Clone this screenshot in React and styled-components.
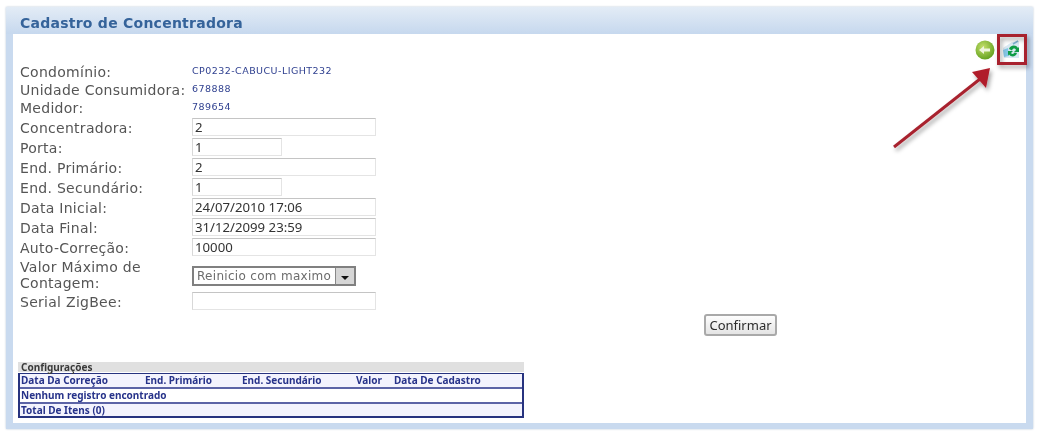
import React from "react"
import styled, { createGlobalStyle } from "styled-components"

const Global = createGlobalStyle`
    html, body {
        margin: 0;
        background: #fff;
    }
`

const Page = styled.div`
    width: 1039px;
    height: 437px;
    padding: 7px 6px 8px 6px;
    box-sizing: border-box;
    position: relative;
    overflow: hidden;
    filter: blur(0.55px);
`

const Panel = styled.div`
    height: 100%;
    box-sizing: border-box;
    display: flex;
    flex-direction: column;
    background: #c9daef;
    padding: 0 7px 6px 7px;
    box-shadow: 0 0 2px #b9c6d6;
`

const Header = styled.div`
    flex: none;
    height: 27px;
    box-sizing: border-box;
    margin: 0 -7px;
    padding: 5px 0 0 14px;
    display: flex;
    align-items: center;
    background: linear-gradient(#e3ecf6, #c6d8ee);
    color: #35639a;
    font: bold 14px "DejaVu Sans", sans-serif;
    letter-spacing: 0.25px;
`

const Body = styled.div`
    flex: 1;
    min-height: 0;
    background: #fff;
    padding: 5px 0 0 7px;
    display: flex;
    flex-direction: column;
`

const Toolbar = styled.div`
    flex: none;
    height: 22px;
    padding-right: 5px;
    margin-bottom: 2px;
    display: flex;
    justify-content: flex-end;
    align-items: center;
    gap: 7px;
`

const Form = styled.div`
    flex: none;
    display: flex;
    flex-direction: column;
    width: 380px;
`

const Row = styled.div`
    display: grid;
    grid-template-columns: 172px 1fr;
    align-items: center;
    height: ${(p) => p.$h || 20}px;
`

const Label = styled.div`
    color: #555;
    font: 14px/18px "DejaVu Sans", sans-serif;
    letter-spacing: 0.28px;
    white-space: nowrap;
`

const FieldLabel = styled(Label)`
    padding-top: 2px;
`

const WrappedLabel = styled(Label)`
    line-height: 16px;
    padding-top: 2px;
`

const Info = styled.div`
    color: #2e3f8f;
    font: 9.5px "DejaVu Sans", sans-serif;
    letter-spacing: 0.45px;
    margin-top: -4px;
`

const Input = styled.div`
    width: ${(p) => (p.$short ? 90 : 184)}px;
    height: 18px;
    box-sizing: border-box;
    border: 1px solid #e4e4e4;
    border-top-color: #c4c4c4;
    border-left-color: #d8d8d8;
    padding-left: 2px;
    color: #333;
    font: 13.2px/16px "Noto Sans", sans-serif;
    background: #fff;
`

const Select = styled.div`
    width: 164px;
    height: 20px;
    margin-top: 4px;
    box-sizing: border-box;
    border: 2px solid #808080;
    display: flex;
    align-items: center;
    justify-content: space-between;
    padding-left: 3px;
    color: #6c6c6c;
    font: 12px "DejaVu Sans", sans-serif;
    letter-spacing: 0.3px;
    white-space: nowrap;
`

const SelectArrow = styled.div`
    flex: none;
    width: 18px;
    height: 16px;
    background: #d6d6d6;
    border-left: 1px solid #888;
    display: flex;
    align-items: center;
    justify-content: center;

    &::after {
        content: "";
        margin-top: 4px;
        border-left: 4px solid transparent;
        border-right: 4px solid transparent;
        border-top: 4px solid #111;
    }
`

const ButtonRow = styled.div`
    flex: none;
    margin-top: 3px;
    padding-left: 684px;
`

const Button = styled.div`
    width: 73px;
    height: 22px;
    box-sizing: border-box;
    border: 2px solid #a9a9a9;
    border-radius: 3px;
    background: linear-gradient(#fdfdfd, #e4e4e4);
    color: #2c2c2c;
    font: 13px/18px "Noto Sans", sans-serif;
    text-align: center;
`

const Section = styled.div`
    flex: none;
    width: 506px;
    margin: 26px 0 0 -2px;
`

const SectionTitle = styled.div`
    height: 10px;
    background: #e0e0e0;
    color: #3a3a3a;
    padding-left: 3px;
    font: bold 10px/10px "Noto Sans", sans-serif;
`

const Grid = styled.div`
    border: 2px solid #27337f;
    border-top-width: 1px;
    margin-top: 1px;
`

const GridRow = styled.div`
    display: grid;
    box-sizing: border-box;
    grid-template-columns: ${(p) => p.$cols || "1fr"};
    height: ${(p) => p.$h}px;
    align-items: center;
    padding-left: 1px;
    background: ${(p) => (p.$alt ? "#f3f3fd" : "#fff")};
    border-top: ${(p) => (p.$line ? "2px solid #5c64a6" : "none")};
    color: #27338a;
    font: bold 10px/11px "Noto Sans", sans-serif;
    white-space: nowrap;
`

const BackIcon = () => (
    <svg width="20" height="20" viewBox="0 0 20 20">
        <defs>
            <radialGradient id="ball" cx="40%" cy="35%" r="70%">
                <stop offset="0" stopColor="#c5e06b" />
                <stop offset="1" stopColor="#5f9e1c" />
            </radialGradient>
        </defs>
        <circle cx="10" cy="10" r="9.5" fill="url(#ball)" />
        <path d="M4 10l5-4v2.500h6v3H9V14z" fill="#eef5dc" />
    </svg>
)

const RefreshIcon = () => (
    <svg width="19" height="20" viewBox="0 0 19 20">
        <path d="M1 8l9-6 7-1v17H2z" fill="#d8e8f2" />
        <path d="M1 10l5-2 1 8-5 1z" fill="#84c6e6" />
        <path d="M11 4l5-3" stroke="#7db0cf" strokeWidth="1.500" />
        <path d="M7 9c1-4 7-5 9-1l1-1v5h-5l2-2c-1-2-3-2-4 .5z" fill="#0f9c46" />
        <path d="M15 13c-1 4-6 4.500-8 1.500l-1 1v-4.500h5l-2 2c1 1.500 3 1 3.500-.5z" fill="#0f9c46" />
    </svg>
)

const Arrow = styled.svg`
    position: absolute;
    left: 0;
    top: 0;
    width: 1039px;
    height: 437px;
    pointer-events: none;
`

const Callout = () => (
    <Arrow viewBox="0 0 1039 437">
        <defs>
            <filter id="shadow" x="-20%" y="-20%" width="150%" height="150%">
                <feDropShadow dx="2" dy="3" stdDeviation="2" floodColor="#000" floodOpacity="0.35" />
            </filter>
        </defs>
        <g filter="url(#shadow)">
            <rect x="998.500" y="35.500" width="27" height="28" fill="none" stroke="#a8222f" strokeWidth="3" />
            <path d="M894 147L980 79" stroke="#a8222f" strokeWidth="3" fill="none" />
            <path d="M990 68L972 72 986 88z" fill="#b01f2c" />
        </g>
    </Arrow>
)

const gridCols = "124px 97px 114px 38px 1fr"

export default function App() {
    return (
        <Page>
            <Global />
            <Panel>
                <Header>Cadastro de Concentradora</Header>
                <Body>
                    <Toolbar>
                        <BackIcon />
                        <RefreshIcon />
                    </Toolbar>
                    <Form>
                        <Row $h={18}><Label>Condomínio:</Label><Info>CP0232-CABUCU-LIGHT232</Info></Row>
                        <Row $h={18}><Label>Unidade Consumidora:</Label><Info>678888</Info></Row>
                        <Row $h={18}><Label>Medidor:</Label><Info>789654</Info></Row>
                        <Row><FieldLabel>Concentradora:</FieldLabel><Input>2</Input></Row>
                        <Row><FieldLabel>Porta:</FieldLabel><Input $short>1</Input></Row>
                        <Row><FieldLabel>End. Primário:</FieldLabel><Input>2</Input></Row>
                        <Row><FieldLabel>End. Secundário:</FieldLabel><Input $short>1</Input></Row>
                        <Row><FieldLabel>Data Inicial:</FieldLabel><Input>24/07/2010 17:06</Input></Row>
                        <Row><FieldLabel>Data Final:</FieldLabel><Input>31/12/2099 23:59</Input></Row>
                        <Row><FieldLabel>Auto-Correção:</FieldLabel><Input>10000</Input></Row>
                        <Row $h={34}>
                            <WrappedLabel>Valor Máximo de<br />Contagem:</WrappedLabel>
                            <Select>Reinicio com maximo<SelectArrow /></Select>
                        </Row>
                        <Row><FieldLabel>Serial ZigBee:</FieldLabel><Input /></Row>
                    </Form>
                    <ButtonRow><Button>Confirmar</Button></ButtonRow>
                    <Section>
                        <SectionTitle>Configurações</SectionTitle>
                        <Grid>
                            <GridRow $alt $h={13} $cols={gridCols}>
                                <span>Data Da Correção</span>
                                <span>End. Primário</span>
                                <span>End. Secundário</span>
                                <span>Valor</span>
                                <span>Data De Cadastro</span>
                            </GridRow>
                            <GridRow $line $h={15}>Nenhum registro encontrado</GridRow>
                            <GridRow $alt $line $h={14}>Total De Itens (0)</GridRow>
                        </Grid>
                    </Section>
                </Body>
            </Panel>
            <Callout />
        </Page>
    )
}
